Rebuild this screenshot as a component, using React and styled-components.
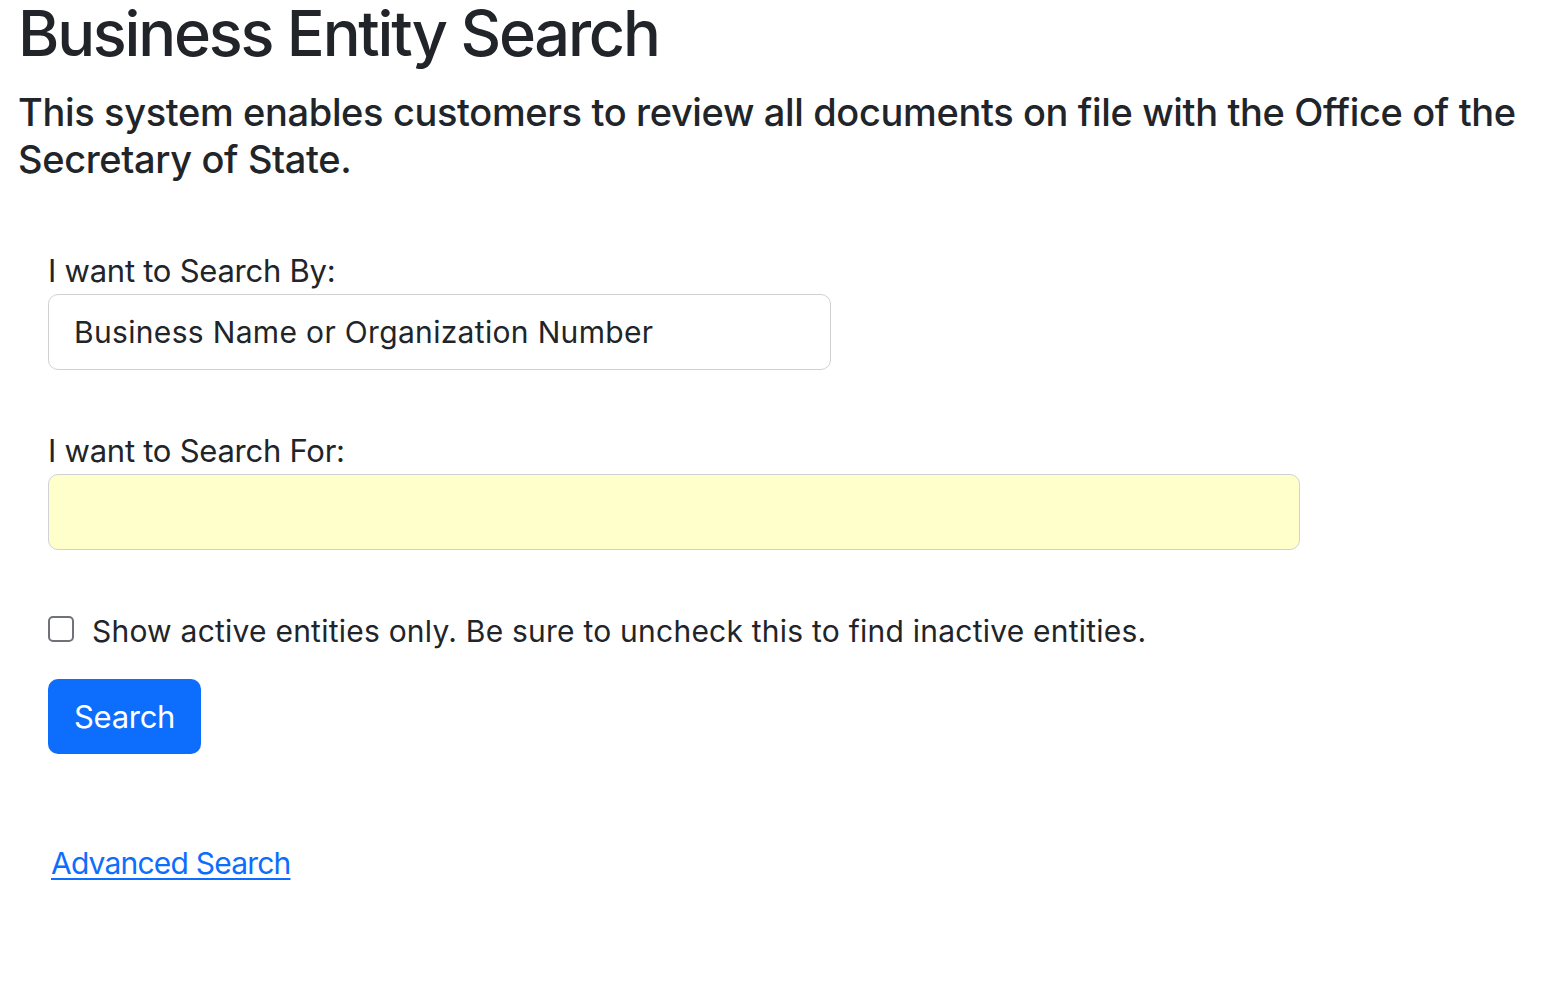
import React from "react";
import styled, { createGlobalStyle } from "styled-components";

const Global = createGlobalStyle`
  html, body { margin: 0; padding: 0; background: #fff; }
  body {
    font-family: Inter, "Liberation Sans", Arial, sans-serif;
    color: #212529;
  }
  * { box-sizing: border-box; }
`;

const Page = styled.main`
  padding: 0 18px;
`;

const Title = styled.h1`
  margin: 0;
  font-size: 63px;
  line-height: 67px;
  font-weight: 500;
  letter-spacing: -2.2px;
`;

const Lead = styled.p`
  margin: 22px 0 0;
  font-size: 38px;
  line-height: 47px;
  font-weight: 500;
  letter-spacing: -0.36px;
`;

const Form = styled.form`
  margin: 64px 0 0 30px;
  display: flex;
  flex-direction: column;
  align-items: flex-start;
`;

const Field = styled.div`
  display: flex;
  flex-direction: column;
  margin-top: ${(p) => p.$gap || 0}px;
`;

const Label = styled.label`
  font-size: 31px;
  line-height: 47px;
  letter-spacing: -0.25px;
`;

const Input = styled.input`
  width: ${(p) => p.$width}px;
  height: 76px;
  padding: 0 25px;
  font-family: inherit;
  font-size: 30px;
  letter-spacing: 0.33px;
  color: #212529;
  background: ${(p) => (p.$highlight ? "#ffffcc" : "#fff")};
  border: 1.5px solid #cfd2d4;
  border-radius: 10px;
  outline: none;
`;

const CheckRow = styled.label`
  display: flex;
  align-items: flex-start;
  gap: 18px;
  margin-top: 58px;
  font-size: 30px;
  line-height: 47px;
  letter-spacing: 0.23px;
`;

const Box = styled.input`
  appearance: none;
  margin: 8px 0 0;
  width: 26px;
  height: 26px;
  border: 2px solid #6f7378;
  border-radius: 5px;
  background: #fff;
  flex: none;
`;

const Button = styled.button`
  margin-top: 24px;
  height: 75px;
  padding: 0 26px;
  border: none;
  border-radius: 10px;
  background: #0d6efd;
  color: #fff;
  font-family: inherit;
  font-size: 31px;
  letter-spacing: -0.3px;
  cursor: pointer;
`;

const Link = styled.a`
  margin: 87px 0 0 3px;
  font-size: 30px;
  line-height: 45px;
  letter-spacing: -0.8px;
  color: #0d6efd;
  text-decoration: underline;
  text-underline-offset: 4px;
  text-decoration-thickness: 2px;
`;

export default function App() {
  return (
    <>
      <Global />
      <Page>
        <Title>Business Entity Search</Title>
        <Lead>
          This system enables customers to review all documents on file with the Office of the
          Secretary of State.
        </Lead>
        <Form onSubmit={(e) => e.preventDefault()}>
          <Field>
            <Label htmlFor="by">I want to Search By:</Label>
            <Input id="by" $width={783} readOnly value="Business Name or Organization Number" />
          </Field>
          <Field $gap={57}>
            <Label htmlFor="for">I want to Search For:</Label>
            <Input id="for" $width={1252} $highlight />
          </Field>
          <CheckRow>
            <Box type="checkbox" />
            Show active entities only. Be sure to uncheck this to find inactive entities.
          </CheckRow>
          <Button type="submit">Search</Button>
          <Link href="#">Advanced Search</Link>
        </Form>
      </Page>
    </>
  );
}
